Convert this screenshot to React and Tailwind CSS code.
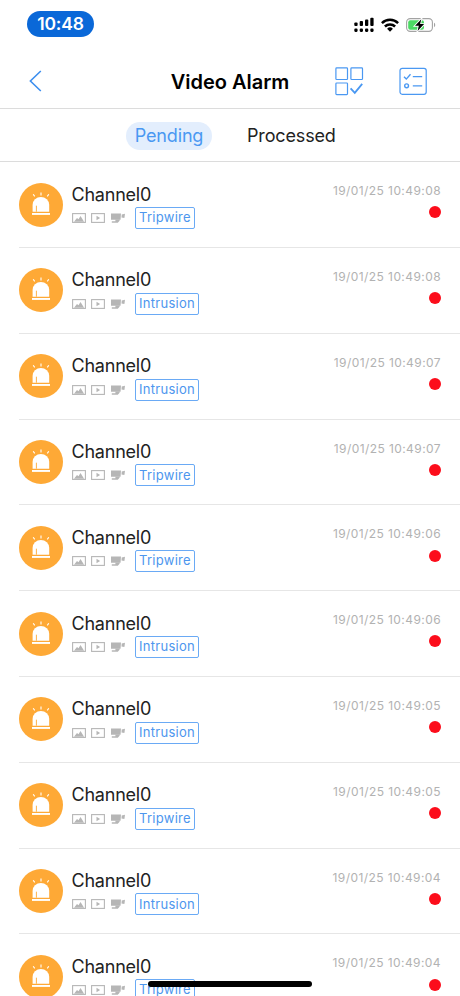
const ALARMS = [
  { id: 1, channel: 'Channel0', type: 'Tripwire', time: '19/01/25 10:49:08' },
  { id: 2, channel: 'Channel0', type: 'Intrusion', time: '19/01/25 10:49:08' },
  { id: 3, channel: 'Channel0', type: 'Intrusion', time: '19/01/25 10:49:07' },
  { id: 4, channel: 'Channel0', type: 'Tripwire', time: '19/01/25 10:49:07' },
  { id: 5, channel: 'Channel0', type: 'Tripwire', time: '19/01/25 10:49:06' },
  { id: 6, channel: 'Channel0', type: 'Intrusion', time: '19/01/25 10:49:06' },
  { id: 7, channel: 'Channel0', type: 'Intrusion', time: '19/01/25 10:49:05' },
  { id: 8, channel: 'Channel0', type: 'Tripwire', time: '19/01/25 10:49:05' },
  { id: 9, channel: 'Channel0', type: 'Intrusion', time: '19/01/25 10:49:04' },
  { id: 10, channel: 'Channel0', type: 'Tripwire', time: '19/01/25 10:49:04' },
];

function SignalIcon() {
  return (
    <svg width="20" height="16" viewBox="0 0 20 16" fill="#000">
      <rect x="0.3" y="5.5" width="3.3" height="3.5" rx="1" />
      <rect x="5.7" y="4.1" width="3.3" height="4.9" rx="1" />
      <rect x="11" y="2.4" width="3.3" height="6.6" rx="1" />
      <rect x="16.3" y="0.8" width="3.3" height="8.2" rx="1" />
      <rect x="0.3" y="11.6" width="3.3" height="3.3" rx="1.1" />
      <rect x="5.7" y="11.6" width="3.3" height="3.3" rx="1.1" />
      <rect x="11" y="11.6" width="3.3" height="3.3" rx="1.1" />
      <rect x="16.3" y="11.6" width="3.3" height="3.3" rx="1.1" />
    </svg>
  );
}

function WifiIcon() {
  return (
    <svg width="18" height="14" viewBox="0 0 18 14" fill="none" stroke="#000" strokeWidth="2.5">
      <path d="M0.9 5.1a11.6 11.6 0 0 1 16.2 0" />
      <path d="M3.9 8.5a7.3 7.3 0 0 1 10.2 0" />
      <path d="M9 13.8L6.1 10.8a4.1 4.1 0 0 1 5.8 0z" fill="#000" stroke="none" />
    </svg>
  );
}

function BatteryIcon() {
  return (
    <svg width="30" height="14" viewBox="0 0 30 14" fill="none">
      <rect x="0.6" y="0.6" width="25.8" height="12.8" rx="3.6" stroke="#a3a3a3" strokeWidth="1.1" />
      <path d="M28 4.8c1.6.6 1.6 3.8 0 4.4z" fill="#a3a3a3" />
      <rect x="2.2" y="2.2" width="15.8" height="9.6" rx="2" fill="#4cd964" />
      <path d="M15.3 1.2L9 7.8h3.8l-1.2 5.2 6.5-6.9h-4z" fill="#000" stroke="#fff" strokeWidth="1.8" paintOrder="stroke" />
    </svg>
  );
}

function SelectIcon() {
  return (
    <svg width="29" height="29" viewBox="0 0 29 29" fill="none" stroke="#4a98f2" strokeWidth="1.2">
      <rect x="0.9" y="0.9" width="11.6" height="11.6" rx="0.8" />
      <rect x="15.9" y="0.9" width="11.6" height="11.6" rx="0.8" />
      <rect x="0.9" y="16" width="11.6" height="11.6" rx="0.8" />
      <path d="M15.6 21.3l4.2 4.6 7.4-9" strokeWidth="1.8" />
    </svg>
  );
}

function ChecklistIcon() {
  return (
    <svg width="29" height="29" viewBox="0 0 29 29" fill="none" stroke="#4a98f2" strokeWidth="1.2">
      <rect x="1" y="1.3" width="26.2" height="26" rx="2.2" />
      <path d="M5 9.8l2.3 2.3 4.2-4.8" strokeWidth="1.4" />
      <path d="M13.8 9.6h9.4M13.8 18.8h9.4" />
      <circle cx="7.6" cy="18.8" r="1.9" strokeWidth="1.4" />
    </svg>
  );
}

function SirenIcon() {
  return (
    <svg width="44" height="44" viewBox="0 0 44 44" fill="#fff">
      <path d="M13.6 28.7V21.8a8.3 7.9 0 0 1 16.6 0v6.9z" />
      <path d="M17.4 28.7v-6" stroke="#fea936" strokeWidth="0.9" />
      <rect x="13" y="30" width="18" height="1.9" />
      <path d="M22 9.6v2.8M14.2 11.2l1.5 2.2M29.8 11.2l-1.5 2.2" stroke="#fff" strokeWidth="1.1" />
    </svg>
  );
}

function PictureIcon() {
  return (
    <svg width="14" height="10" viewBox="0 0 14 10">
      <rect x="0.6" y="0.6" width="12.8" height="8.8" fill="none" stroke="#b6b6b6" strokeWidth="1.1" />
      <path d="M2 8.8l3-3.8 1.5 1.2 2-3.2 3.6 5.8z" fill="#b6b6b6" />
    </svg>
  );
}

function PlayIcon() {
  return (
    <svg width="14" height="10" viewBox="0 0 14 10">
      <rect x="0.6" y="0.6" width="12.8" height="8.8" fill="none" stroke="#b6b6b6" strokeWidth="1.1" />
      <path d="M5.5 2.8v4.4l3.6-2.2z" fill="#b6b6b6" />
    </svg>
  );
}

function CameraIcon() {
  return (
    <svg width="14" height="10" viewBox="0 0 14 10" fill="#b6b6b6">
      <path d="M0 0.4h10L9.6 6.8H0z" />
      <path d="M10.7 1.6l3.3-.9-.6 4.4-2.9-.5z" />
      <path d="M4.4 6.5h4.2v1.2L6.8 9.8H0.8V8.2h3.6z" />
    </svg>
  );
}

function AlarmRow({ alarm }) {
  return (
    <li className="ml-[19px] flex h-[85.8px] shrink-0 items-center border-b border-[#e6e6e6] pr-[19px]">
      <div className="size-11 shrink-0 rounded-full bg-[#fea936]">
        <SirenIcon />
      </div>
      <div className="ml-[8.5px] flex-1 pt-[2.2px]">
        <p className="text-[18px] leading-6 tracking-[-0.22px] text-[#222]">{alarm.channel}</p>
        <div className="mt-[0.5px] flex h-[22px] items-center gap-[5.7px]">
          <PictureIcon />
          <PlayIcon />
          <CameraIcon />
          <span className="ml-[4.5px] flex h-[22px] items-center rounded-[2px] border border-[#6aaaf5] px-[3px] text-[13px] tracking-[0.27px] whitespace-nowrap text-[#4d96ee]">
            {alarm.type}
          </span>
        </div>
      </div>
      <div className="flex h-[45px] flex-col items-end">
        <time className="text-[12px] leading-[18px] tracking-[0.42px] text-[#b2b2b2]">{alarm.time}</time>
        <span className="mt-[6.2px] size-3 rounded-full bg-[#fc0d1b]" />
      </div>
    </li>
  );
}

export default function App() {
  return (
    <div className="relative flex h-[996px] w-[460px] flex-col overflow-hidden bg-white font-['Inter',sans-serif]">
      <div className="flex h-12 shrink-0 items-center justify-between pr-6 pl-[27px]">
        <span className="flex h-[26px] w-[67px] items-center justify-center rounded-full bg-[#0a68d8] text-[17.5px] font-semibold tracking-[-0.2px] text-white">
          10:48
        </span>
        <div className="flex items-center gap-[7px] pt-px">
          <SignalIcon />
          <WifiIcon />
          <BatteryIcon />
        </div>
      </div>

      <header className="grid h-[61px] shrink-0 grid-cols-[1fr_auto_1fr] items-center border-b border-[#dcdcdc] pt-1.5 pr-8 pl-[29px]">
        <button aria-label="Back">
          <svg width="13" height="22" viewBox="0 0 13 22" fill="none" stroke="#3d8fef" strokeWidth="1.6">
            <path d="M11.8 1L1.4 11l10.4 10" />
          </svg>
        </button>
        <h1 className="pt-px pl-[3px] text-[20px] font-semibold text-black">Video Alarm</h1>
        <div className="flex justify-end gap-[35px]">
          <SelectIcon />
          <ChecklistIcon />
        </div>
      </header>

      <nav className="flex h-[53.3px] shrink-0 items-center border-b border-[#dcdcdc] pt-px pl-[126px] text-[18px] tracking-[-0.15px]">
        <button className="h-7 w-[86px] rounded-full bg-[#e3eefd] text-[#4a98f2]">Pending</button>
        <button className="ml-[35px] text-[#222]">Processed</button>
      </nav>

      <ul className="flex flex-col">
        {ALARMS.map(a => <AlarmRow key={a.id} alarm={a} />)}
      </ul>

      <div className="absolute bottom-[9px] left-[148px] h-[6px] w-[164px] rounded-full bg-black" />
    </div>
  );
}
